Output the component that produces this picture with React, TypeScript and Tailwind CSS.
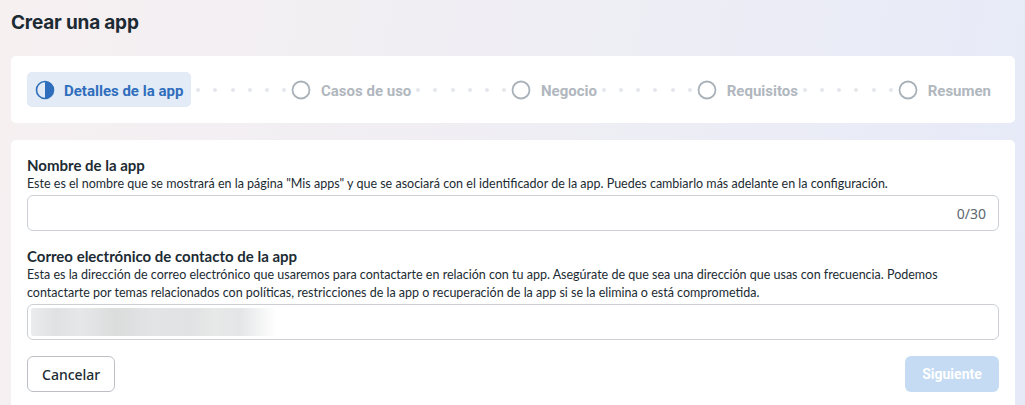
const steps = ['Casos de uso', 'Negocio', 'Requisitos', 'Resumen'];

function Dots() {
  return (
    <div className="flex-1 flex items-center justify-between px-[5px]">
      {Array.from({ length: 6 }).map((_, i) => (
        <span key={i} className="w-[4px] h-[4px] rounded-full bg-[#e4e7eb]" />
      ))}
    </div>
  );
}

function HalfCircle() {
  return (
    <svg width="20" height="20" viewBox="0 0 20 20">
      <circle cx="10" cy="10" r="8.5" fill="none" stroke="#2f6ebc" strokeWidth="1.6" />
      <path d="M10 1.5 A8.5 8.5 0 0 1 10 18.5 Z" fill="#2f6ebc" />
    </svg>
  );
}

function EmptyCircle() {
  return (
    <svg width="20" height="20" viewBox="0 0 20 20">
      <circle cx="10" cy="10" r="8.5" fill="none" stroke="#a9b1b9" strokeWidth="1.8" />
    </svg>
  );
}

function Field({
  label,
  children,
  desc,
}: {
  label: string;
  desc: string;
  children?: React.ReactNode;
}) {
  return (
    <div>
      <div className="text-[15px] leading-[20px] font-bold text-[#1c2b33] font-['Lato',sans-serif]">{label}</div>
      <p className="text-[12.5px] leading-[18px] text-[#1c2b33] font-['Lato',sans-serif]">{desc}</p>
      <div className="mt-[2px] h-[36px] rounded-[6px] border border-[#ccd0d5] bg-white flex items-center px-[3px] relative">
        {children}
      </div>
    </div>
  );
}

export default function App() {
  return (
    <div className="h-[405px] overflow-hidden bg-[linear-gradient(100deg,#f6f0f1_0%,#efeef4_50%,#e6eaf8_100%)] pl-[11px] pr-[10px] font-['Noto_Sans',sans-serif]">
      <h1 className="pt-[9px] text-[19px] leading-[28px] font-bold text-[#1c2b33] font-['Inter',sans-serif] tracking-[-0.2px]">
        Crear una app
      </h1>

      <div className="mt-[19px] bg-white rounded-[5px] h-[67px] pl-[16px] pr-[24px] flex items-center font-['Roboto',sans-serif]">
        <div className="flex items-center gap-[9px] h-[35px] pl-[8px] pr-[8px] rounded-[5px] bg-[#e2ebf6]">
          <HalfCircle />
          <span className="text-[15px] leading-[20px] mt-[2px] font-bold text-[#2f6ebc]">Detalles de la app</span>
        </div>
        {steps.map((s) => (
          <div key={s} className="contents">
            <Dots />
            <div className="flex items-center gap-[10px]">
              <EmptyCircle />
              <span className="text-[15px] leading-[20px] mt-[2px] font-bold text-[#b1b7be]">{s}</span>
            </div>
          </div>
        ))}
      </div>

      <div className="mt-[17px] bg-white rounded-t-[5px] px-[16px] pt-[15px] h-[300px]">
        <Field
          label="Nombre de la app"
          desc={'Este es el nombre que se mostrará en la página "Mis apps" y que se asociará con el identificador de la app. Puedes cambiarlo más adelante en la configuración.'}
        >
          <span className="absolute right-[12px] text-[14px] text-[#606770]">0/30</span>
        </Field>

        <div className="mt-[15px]">
          <Field
            label="Correo electrónico de contacto de la app"
            desc="Esta es la dirección de correo electrónico que usaremos para contactarte en relación con tu app. Asegúrate de que sea una dirección que usas con frecuencia. Podemos contactarte por temas relacionados con políticas, restricciones de la app o recuperación de la app si se la elimina o está comprometida."
          >
            <div className="h-[28px] w-[245px] rounded-[2px] bg-[linear-gradient(90deg,#ebecee_0%,#dfe1e3_10%,#e6e7e9_20%,#dadddc_35%,#e3e4e6_50%,#e0e2e3_65%,#e7e9e8_75%,#e4e5e7_85%,#ffffff_100%)]" />
          </Field>
        </div>

        <div className="mt-[16px] flex items-center justify-between">
          <button className="h-[36px] px-[14px] rounded-[6px] border border-[#bcc0c4] text-[14px] font-medium text-[#1c2b33] bg-white">
            Cancelar
          </button>
          <button className="h-[36px] w-[94px] rounded-[6px] bg-[#c5dbf3] text-[14px] font-bold text-white font-['Roboto',sans-serif]">
            Siguiente
          </button>
        </div>
      </div>
    </div>
  );
}
